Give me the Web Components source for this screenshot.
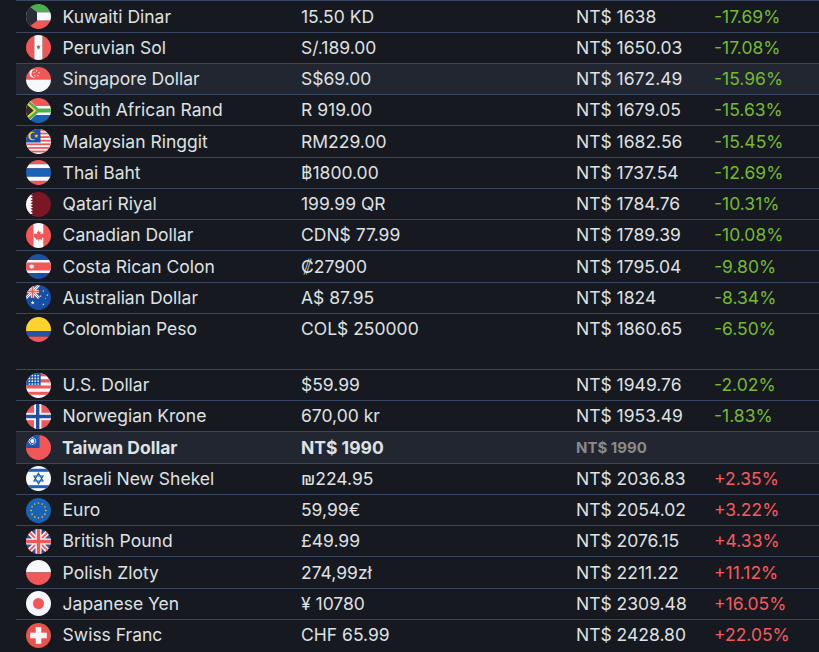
<!DOCTYPE html>
<html>
<head>
<meta charset="utf-8">
<title>Regional prices</title>
<style>
  html, body { margin: 0; background: #161920; overflow: hidden; }
  body { font-family: Inter, "Noto Sans", sans-serif; color: #dfe1e3; }
</style>
</head>
<body>
<template id="flag-art">
  <style>
    :host { display: block; width: 25px; height: 25px; border-radius: 50%; overflow: hidden; }
    svg { display: block; width: 25px; height: 25px; }
  </style>
</template>

<template id="row-tpl">
  <style>
    :host {
      display: grid;
      grid-template-columns: 46.6px 238.4px 275px 138px 1fr;
      align-items: center;
      box-sizing: border-box;
      height: 31.25px;
      padding-top: .5px;
      border-top: 1px solid #3a4660;
      font-size: 17.5px;
      line-height: 20px;
      white-space: nowrap;
    }
    :host([hl]) { background: #212631; }
    :host([home]) { background: #212631; font-weight: 700; }
    :host([home]) .name { margin-left: -.6px; }
    flag-icon { margin-left: 10px; }
    :host([home]) .conv { font-size: 15px; color: #8a8a8a; }
    .diff.down { color: #75b92f; }
    .diff.up { color: #f65a5e; }
  </style>
  <flag-icon></flag-icon>
  <div class="name"><slot></slot></div>
  <div class="local"><slot name="local"></slot></div>
  <div class="conv"><slot name="conv"></slot></div>
  <div class="diff"><slot name="diff"></slot></div>
</template>

<price-table>
  <price-group>
    <price-row flag="kw">Kuwaiti Dinar<span slot="local">15.50 KD</span><span slot="conv">NT$ 1638</span><span slot="diff">-17.69%</span></price-row>
    <price-row flag="pe">Peruvian Sol<span slot="local">S/.189.00</span><span slot="conv">NT$ 1650.03</span><span slot="diff">-17.08%</span></price-row>
    <price-row flag="sg" hl>Singapore Dollar<span slot="local">S$69.00</span><span slot="conv">NT$ 1672.49</span><span slot="diff">-15.96%</span></price-row>
    <price-row flag="za">South African Rand<span slot="local">R 919.00</span><span slot="conv">NT$ 1679.05</span><span slot="diff">-15.63%</span></price-row>
    <price-row flag="my">Malaysian Ringgit<span slot="local">RM229.00</span><span slot="conv">NT$ 1682.56</span><span slot="diff">-15.45%</span></price-row>
    <price-row flag="th">Thai Baht<span slot="local">฿1800.00</span><span slot="conv">NT$ 1737.54</span><span slot="diff">-12.69%</span></price-row>
    <price-row flag="qa">Qatari Riyal<span slot="local">199.99 QR</span><span slot="conv">NT$ 1784.76</span><span slot="diff">-10.31%</span></price-row>
    <price-row flag="ca">Canadian Dollar<span slot="local">CDN$ 77.99</span><span slot="conv">NT$ 1789.39</span><span slot="diff">-10.08%</span></price-row>
    <price-row flag="cr">Costa Rican Colon<span slot="local">₡27900</span><span slot="conv">NT$ 1795.04</span><span slot="diff">-9.80%</span></price-row>
    <price-row flag="au">Australian Dollar<span slot="local">A$ 87.95</span><span slot="conv">NT$ 1824</span><span slot="diff">-8.34%</span></price-row>
    <price-row flag="co">Colombian Peso<span slot="local">COL$ 250000</span><span slot="conv">NT$ 1860.65</span><span slot="diff">-6.50%</span></price-row>
  </price-group>
  <price-group>
    <price-row flag="us">U.S. Dollar<span slot="local">$59.99</span><span slot="conv">NT$ 1949.76</span><span slot="diff">-2.02%</span></price-row>
    <price-row flag="no">Norwegian Krone<span slot="local">670,00 kr</span><span slot="conv">NT$ 1953.49</span><span slot="diff">-1.83%</span></price-row>
    <price-row flag="tw" home>Taiwan Dollar<span slot="local">NT$ 1990</span><span slot="conv">NT$ 1990</span></price-row>
    <price-row flag="il">Israeli New Shekel<span slot="local">₪224.95</span><span slot="conv">NT$ 2036.83</span><span slot="diff">+2.35%</span></price-row>
    <price-row flag="eu">Euro<span slot="local">59,99€</span><span slot="conv">NT$ 2054.02</span><span slot="diff">+3.22%</span></price-row>
    <price-row flag="gb">British Pound<span slot="local">£49.99</span><span slot="conv">NT$ 2076.15</span><span slot="diff">+4.33%</span></price-row>
    <price-row flag="pl">Polish Zloty<span slot="local">274,99zł</span><span slot="conv">NT$ 2211.22</span><span slot="diff">+11.12%</span></price-row>
    <price-row flag="jp">Japanese Yen<span slot="local">¥ 10780</span><span slot="conv">NT$ 2309.48</span><span slot="diff">+16.05%</span></price-row>
    <price-row flag="ch">Swiss Franc<span slot="local">CHF 65.99</span><span slot="conv">NT$ 2428.80</span><span slot="diff">+22.05%</span></price-row>
  </price-group>
</price-table>

<script>
const R = '#f25757', W = '#f6f8fc', B = '#1a61b8', G = '#4cae4f', K = '#2a2d38', Y = '#ffd22e'

const star = (x, y, r, fill) => {
  let pts = []
  for (let i = 0; i < 10; i++) {
    const a = -Math.PI / 2 + i * Math.PI / 5
    const d = i % 2 ? r * 0.42 : r
    pts.push((x + d * Math.cos(a)).toFixed(2) + ',' + (y + d * Math.sin(a)).toFixed(2))
  }
  return `<polygon points="${pts.join(' ')}" fill="${fill}"/>`
}
const ring = (cx, cy, rad, n, fn) => {
  let s = ''
  for (let i = 0; i < n; i++) {
    const a = -Math.PI / 2 + i * 2 * Math.PI / n
    s += fn(cx + rad * Math.cos(a), cy + rad * Math.sin(a))
  }
  return s
}
const rect = (x, y, w, h, f) => `<rect x="${x}" y="${y}" width="${w}" height="${h}" fill="${f}"/>`

const usDots = () => {
  let s = ''
  for (let r = 0; r < 4; r++) for (let c = 0; c < 4; c++) s += `<circle cx="${3.4 + c * 2.9}" cy="${2.6 + r * 2.8}" r=".85" fill="${W}"/>`
  return s
}
const jack = (size) => `<g transform="scale(${size / 25})">
  ${rect(0, 0, 25, 25, '#3f4d8c')}
  <path d="M0 0L25 25M25 0L0 25" stroke="${W}" stroke-width="5"/>
  <path d="M0 0L25 25M25 0L0 25" stroke="${R}" stroke-width="1.8"/>
  ${rect(9.5, 0, 6, 25, W)}${rect(0, 9.5, 25, 6, W)}
  ${rect(10.8, 0, 3.4, 25, R)}${rect(0, 10.8, 25, 3.4, R)}
</g>`

const FLAGS = {
  kw: rect(0, 0, 25, 8.3, G) + rect(0, 8.3, 25, 8.4, W) + rect(0, 16.7, 25, 8.3, R) + `<path d="M0 0L11 8.3V16.7L0 25Z" fill="${K}"/>`,
  pe: rect(0, 0, 8.3, 25, R) + rect(8.3, 0, 8.4, 25, W) + rect(16.7, 0, 8.3, 25, R) + `<path d="M10.6 10.6q1.9 1.2 3.8 0q.1 2.6-1.9 3.8q-2-1.2-1.9-3.8Z" fill="#6b9c62"/><circle cx="12.5" cy="11.4" r=".9" fill="#b0433f"/>`,
  sg: rect(0, 0, 25, 12.5, R) + rect(0, 12.5, 25, 12.5, W) + `<circle cx="7.5" cy="6.5" r="4" fill="${W}"/><circle cx="9.2" cy="6.5" r="3.7" fill="${R}"/>` + ring(10.5, 6.5, 2.6, 5, (x, y) => star(x, y, 1, W)),
  za: rect(0, 0, 25, 8, R) + rect(0, 8, 25, 9, W) + rect(0, 17, 25, 8, B) +
    `<path d="M-1 -2L12 10H25V15H12L-1 27Z" fill="${W}"/><path d="M0 0L12.5 10.6H25V14.4H12.5L0 25Z" fill="${G}"/><path d="M0 4.5L9 12.5L0 20.5Z" fill="${K}" stroke="${Y}" stroke-width="2"/><path d="M-1 5.8L7.4 12.5L-1 19.2Z" fill="${K}"/>`,
  my: rect(0, 0, 25, 25, W) + [0, 3.6, 7.2, 10.8, 14.4, 18, 21.6].map(y => rect(0, y, 25, 1.8, R)).join('') + rect(0, 0, 14.5, 13.5, '#1c4fa8') +
    `<circle cx="6.5" cy="7" r="4.2" fill="${Y}"/><circle cx="8" cy="7" r="3.5" fill="#1c4fa8"/>` + star(10.3, 7, 2.3, Y),
  th: rect(0, 0, 25, 4.2, R) + rect(0, 4.2, 25, 4.2, W) + rect(0, 8.4, 25, 8.3, '#1a61b8') + rect(0, 16.7, 25, 4.2, W) + rect(0, 20.9, 25, 4.1, R),
  qa: rect(0, 0, 25, 25, '#7a1722') + `<path d="M0 0H4.5L7 1.4L4.5 2.8L7 4.2L4.5 5.6L7 7L4.5 8.4L7 9.8L4.5 11.2L7 12.6L4.5 14L7 15.4L4.5 16.8L7 18.2L4.5 19.6L7 21L4.5 22.4L7 23.8L4.5 25H0Z" fill="${W}"/>`,
  ca: rect(0, 0, 7.3, 25, R) + rect(7.3, 0, 10.4, 25, W) + rect(17.7, 0, 7.3, 25, R) +
    `<path d="M12.5 7l1.2 2.2 1.2-.6-.4 2.9 1.6-1.4.4 1 1.9-.3-.6 2 .9.5-2.9 2.3.3 1.1-2.9-.4v2.3h-.6v-2.3l-2.9.4.3-1.1-2.9-2.3.9-.5-.6-2 1.9.3.4-1 1.6 1.4-.4-2.9 1.2.6Z" fill="${R}"/>`,
  cr: rect(0, 0, 25, 25, '#1d4fa5') + rect(0, 6, 25, 13, W) + rect(0, 8.5, 25, 8, R) + `<ellipse cx="5.7" cy="12.5" rx="2.4" ry="2" fill="${W}"/>`,
  au: rect(0, 0, 25, 25, '#174ea6') + jack(13) + star(6.7, 17.7, 2.1, W) + star(17.3, 6, 1.1, W) + star(21.3, 10, 1.1, W) + star(14.7, 11, 1.1, W) + star(17.3, 19.3, 1.1, W) + star(19.5, 13.5, .7, W),
  co: rect(0, 0, 25, 14, Y) + rect(0, 14, 25, 5.5, '#1d55b0') + rect(0, 19.5, 25, 5.5, R),
  us: rect(0, 0, 25, 25, W) + [[0, 3.3], [6.2, 3.3], [12.5, 3], [18.8, 3]].map(([y, h]) => rect(0, y, 25, h, R)).join('') + rect(0, 0, 14.7, 12.5, '#1a57ad') + usDots(),
  no: rect(0, 0, 25, 25, R) + rect(8, 0, 7.4, 25, W) + rect(0, 8.8, 25, 7.4, W) + rect(10, 0, 3.4, 25, '#1d4fa5') + rect(0, 10.8, 25, 3.4, '#1d4fa5'),
  tw: rect(0, 0, 25, 25, R) + rect(0, 0, 13.5, 13, '#1a57ad') + ring(6.3, 6, 3.3, 12, (x, y) => `<circle cx="${x}" cy="${y}" r=".65" fill="${W}"/>`) + `<circle cx="6.3" cy="6" r="2" fill="${W}"/>`,
  il: rect(0, 0, 25, 25, W) + rect(0, 2.8, 25, 3, '#1a61b8') + rect(0, 19.2, 25, 3, '#1a61b8') +
    `<path d="M12.5 7.3L17 15H8ZM12.5 17.7L8 10H17Z" fill="none" stroke="#1a61b8" stroke-width="1.2"/>`,
  eu: rect(0, 0, 25, 25, '#1a61b8') + ring(12.5, 12.5, 7.4, 12, (x, y) => star(x, y, 1.2, Y)),
  gb: jack(25),
  pl: rect(0, 0, 25, 12.5, W) + rect(0, 12.5, 25, 12.5, R),
  jp: rect(0, 0, 25, 25, W) + `<circle cx="12.5" cy="12.5" r="5.5" fill="${R}"/>`,
  ch: rect(0, 0, 25, 25, '#e8534c') + rect(9.7, 4.2, 5.6, 16.6, W) + rect(4.2, 9.7, 16.6, 5.6, W)
}

class FlagIcon extends HTMLElement {
  static get observedAttributes() { return ['code'] }
  constructor() {
    super()
    this.attachShadow({ mode: 'open' })
    this.shadowRoot.appendChild(document.getElementById('flag-art').content.cloneNode(true))
    this.art = document.createElementNS('http://www.w3.org/2000/svg', 'svg')
    this.art.setAttribute('viewBox', '0 0 25 25')
    this.shadowRoot.appendChild(this.art)
  }
  attributeChangedCallback(name, oldValue, newValue) {
    this.art.innerHTML = FLAGS[newValue] || ''
  }
}

class PriceRow extends HTMLElement {
  constructor() {
    super()
    this.attachShadow({ mode: 'open' })
    this.shadowRoot.appendChild(document.getElementById('row-tpl').content.cloneNode(true))
  }
  connectedCallback() {
    this.shadowRoot.querySelector('flag-icon').setAttribute('code', this.getAttribute('flag'))
    const slotted = this.querySelector('[slot="diff"]')
    if (slotted) {
      const up = slotted.textContent.trim().startsWith('+')
      this.shadowRoot.querySelector('.diff').classList.add(up ? 'up' : 'down')
    }
  }
}

class PriceGroup extends HTMLElement {
  constructor() {
    super()
    this.attachShadow({ mode: 'open' })
    this.shadowRoot.innerHTML = `<style>:host { display: block; }</style><slot></slot>`
  }
}

class PriceTable extends HTMLElement {
  constructor() {
    super()
    this.attachShadow({ mode: 'open' })
    this.shadowRoot.innerHTML = `
      <style>
        :host { display: flex; flex-direction: column; gap: 24.8px; padding: .3px 0 0 16px; }
      </style>
      <slot></slot>`
  }
}

customElements.define('flag-icon', FlagIcon)
customElements.define('price-row', PriceRow)
customElements.define('price-group', PriceGroup)
customElements.define('price-table', PriceTable)
</script>
</body>
</html>
